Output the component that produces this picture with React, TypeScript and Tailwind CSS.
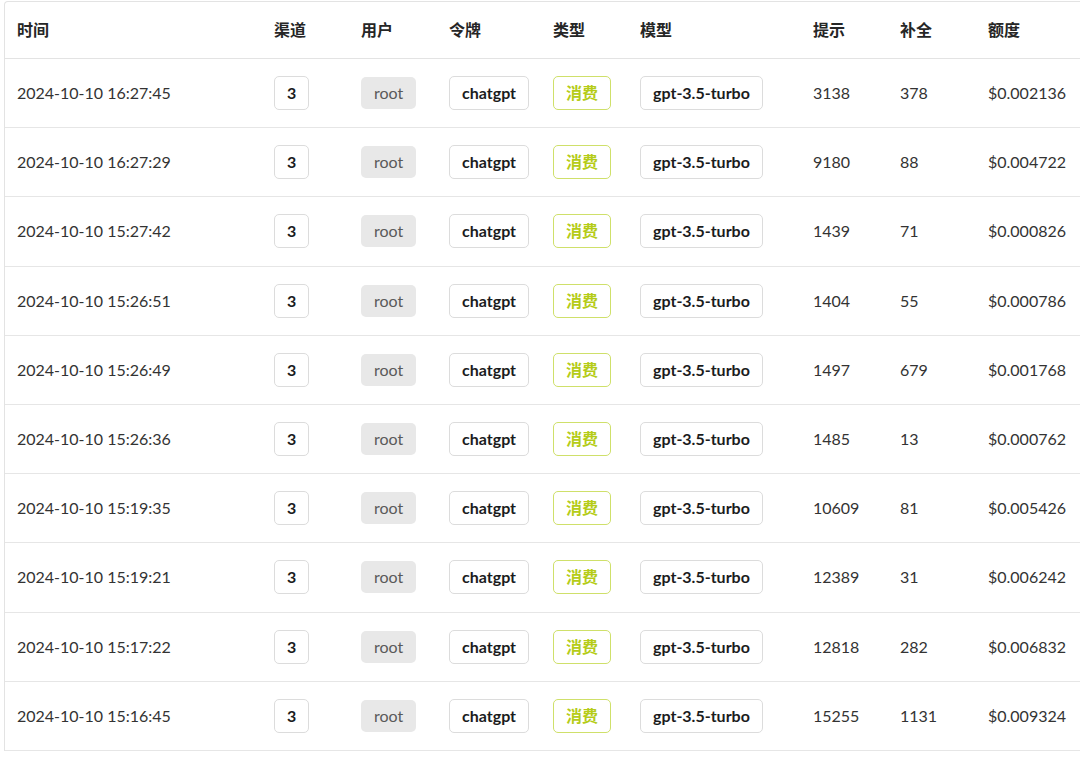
const rows = [
  { time: '2024-10-10 16:27:45', prompt: 3138, completion: 378, quota: '$0.002136' },
  { time: '2024-10-10 16:27:29', prompt: 9180, completion: 88, quota: '$0.004722' },
  { time: '2024-10-10 15:27:42', prompt: 1439, completion: 71, quota: '$0.000826' },
  { time: '2024-10-10 15:26:51', prompt: 1404, completion: 55, quota: '$0.000786' },
  { time: '2024-10-10 15:26:49', prompt: 1497, completion: 679, quota: '$0.001768' },
  { time: '2024-10-10 15:26:36', prompt: 1485, completion: 13, quota: '$0.000762' },
  { time: '2024-10-10 15:19:35', prompt: 10609, completion: 81, quota: '$0.005426' },
  { time: '2024-10-10 15:19:21', prompt: 12389, completion: 31, quota: '$0.006242' },
  { time: '2024-10-10 15:17:22', prompt: 12818, completion: 282, quota: '$0.006832' },
  { time: '2024-10-10 15:16:45', prompt: 15255, completion: 1131, quota: '$0.009324' },
];

const headers = ['时间', '渠道', '用户', '令牌', '类型', '模型', '提示', '补全', '额度'];
const widths = ['w-[257px]', 'w-[87px]', 'w-[88px]', 'w-[104px]', 'w-[87px]', 'w-[173px]', 'w-[87px]', 'w-[88px]', 'w-[200px]'];

const Basic = ({ children }: { children: React.ReactNode }) => (
  <span className="inline-flex h-[34px] items-center rounded-[5px] border border-[#dcdcdc] bg-white px-3 font-bold text-[#1b1c1d]">
    {children}
  </span>
);

export default function App() {
  return (
    <div
      className="h-[763px] w-[1080px] overflow-hidden bg-white pl-1 pt-px text-[16px] text-[#333]"
      style={{ fontFamily: 'Lato, "Noto Sans CJK SC", sans-serif' }}
    >
      <div className="w-[1200px] rounded-tl-[4px] border-l border-t border-[#e3e3e3]">
        {/* Header */}
        <div className="flex h-[57px] items-center border-b border-[#e3e3e3] font-bold text-[#262626]">
          {headers.map((h, i) => (
            <div key={h} className={`${widths[i]} shrink-0 pl-3`}>
              {h}
            </div>
          ))}
        </div>

        {rows.map((r) => (
          <div key={r.time} className="flex h-[69.2px] items-center border-b border-[#e6e6e6]">
            <div className="w-[257px] shrink-0 pl-3">{r.time}</div>
            <div className="w-[87px] shrink-0 pl-3">
              <Basic>3</Basic>
            </div>
            <div className="w-[88px] shrink-0 pl-3">
              <span className="inline-flex h-[32px] items-center rounded-[5px] bg-[#e8e8e8] px-[13px] text-[#5a5a5a]">root</span>
            </div>
            <div className="w-[104px] shrink-0 pl-3">
              <Basic>chatgpt</Basic>
            </div>
            <div className="w-[87px] shrink-0 pl-3">
              <span className="inline-flex h-[34px] items-center rounded-[5px] border border-[#cfe06a] bg-white px-3 font-bold text-[#b5cc18]">
                消费
              </span>
            </div>
            <div className="w-[173px] shrink-0 pl-3">
              <Basic>gpt-3.5-turbo</Basic>
            </div>
            <div className="w-[87px] shrink-0 pl-3">{r.prompt}</div>
            <div className="w-[88px] shrink-0 pl-3">{r.completion}</div>
            <div className="w-[200px] shrink-0 pl-3">{r.quota}</div>
          </div>
        ))}
      </div>
    </div>
  );
}
